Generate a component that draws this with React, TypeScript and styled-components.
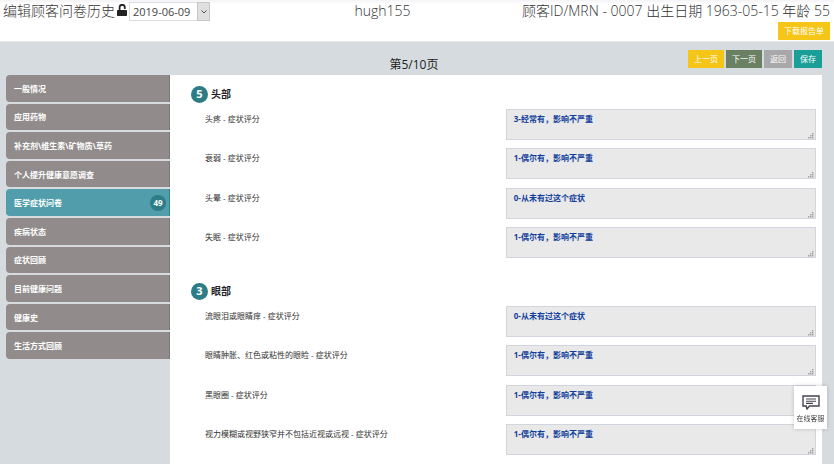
import React from "react";
import styled, { createGlobalStyle } from "styled-components";

const Global = createGlobalStyle`
  *, *::before, *::after { box-sizing: border-box; }
  body {
    margin: 0;
    background: #d6dbdf;
    color: #333;
    font-family: "Open Sans", "Noto Sans CJK SC", sans-serif;
    font-size: 8px;
    line-height: 12px;
    overflow: hidden;
  }
  button, select, textarea { font-family: inherit; }
`;

const Page = styled.div`
  display: flex;
  flex-direction: column;
  height: 100vh;
`;

const Header = styled.header`
  flex: none;
  background: linear-gradient(#f3f3f6, #fff 4px);
  border-bottom: 1px solid #e6eaec;
  padding: 0 4px 1px 3px;
`;

const TitleRow = styled.div`
  display: grid;
  grid-template-columns: 17fr 6fr 17fr;
  align-items: center;
  height: 20px;
  font-size: 14px;
  line-height: 20px;
  font-weight: 300;
  white-space: nowrap;
`;

const TitleGroup = styled.div`
  display: flex;
  align-items: center;
  gap: 2px;
`;

const Title = styled.h1`
  margin: 0;
  font-size: 14px;
  font-weight: 300;
`;

const Patient = styled.span`
  text-align: right;
`;

const DateField = styled.label`
  display: flex;
  position: relative;
  margin-top: 2px;
`;

const DateSelect = styled.select`
  appearance: none;
  width: 81px;
  height: 19px;
  border: 1px solid #dcdce2;
  border-radius: 0;
  padding: 0 14px 0 3px;
  background: #fff;
  color: #444;
  font-size: 11px;
`;

const Arrow = styled.span`
  position: absolute;
  right: 0;
  top: 0;
  bottom: 0;
  width: 13px;
  display: grid;
  place-items: center;
  background: #dfdfe0;
  border: 1px solid #c6c6c8;
  pointer-events: none;
`;

const DownloadRow = styled.div`
  display: flex;
  justify-content: flex-end;
  padding-top: 2px;
`;

const Button = styled.button<{ $bg: string }>`
  border: 0;
  height: 18px;
  padding: 0 6px;
  background: ${(p) => p.$bg};
  color: #fff;
  font-size: 8px;
  line-height: 18px;
`;

const Toolbar = styled.div`
  flex: none;
  display: grid;
  grid-template-columns: 1fr auto 1fr;
  height: 33px;
  padding: 8px 12px 0 6px;
`;

const PageCount = styled.div`
  grid-column: 2;
  padding-top: 5px;
  font-size: 12px;
  line-height: 20px;
  color: #222;
`;

const Actions = styled.div`
  display: flex;
  justify-content: flex-end;
  gap: 2px;
`;

const Body = styled.div`
  flex: 1;
  min-height: 0;
  display: flex;
  align-items: stretch;
  padding: 0 12px 0 6px;
`;

const Nav = styled.nav`
  flex: none;
  width: 164px;
  height: 284px;
  display: grid;
  grid-auto-rows: 1fr;
  gap: 2px;
`;

const NavItem = styled.a<{ $active?: boolean }>`
  display: flex;
  align-items: center;
  justify-content: space-between;
  padding: 1px 3px 0 8px;
  border-radius: 4px 0 0 4px;
  border-right: 1px solid ${(p) => (p.$active ? "#2f7f88" : "#7c7676")};
  background: ${(p) => (p.$active ? "#519dab" : "#918b8b")};
  color: #fff;
  font-weight: 700;
  text-decoration: none;
`;

const Badge = styled.span<{ $size: number }>`
  flex: none;
  display: grid;
  place-items: center;
  width: ${(p) => p.$size}px;
  height: ${(p) => p.$size}px;
  border-radius: 50%;
  background: #2d7d86;
  color: #fff;
  font-size: ${(p) => (p.$size > 16 ? 11 : 8)}px;
  font-weight: 700;
`;

const Panel = styled.main`
  flex: 1;
  min-width: 0;
  background: #fff;
  padding: 10px 6px 0 21px;
  overflow: hidden;
`;

const Section = styled.section`
  height: 197px;
`;

const SectionTitle = styled.h2`
  display: flex;
  align-items: center;
  gap: 3px;
  height: 18px;
  margin: 0 0 6px;
  color: #222;
  font-size: 10px;
  font-weight: 700;
`;

const Questions = styled.div`
  display: grid;
  grid-auto-rows: 1fr;
  height: 157px;
  padding-left: 14px;
`;

const Question = styled.div`
  display: grid;
  grid-template-columns: 32fr 33fr;
  align-items: start;
`;

const QuestionLabel = styled.label`
  padding-top: 4px;
`;

const AnswerBox = styled.div`
  display: flex;
  position: relative;
`;

const Answer = styled.textarea`
  width: 100%;
  height: 31px;
  resize: none;
  border: 1px solid #d3d5dd;
  border-radius: 0;
  padding: 3px 7px;
  background: #e9e9e9;
  color: #123f9c;
  font-size: 8px;
  line-height: 12px;
  font-weight: 700;
`;

const Grip = styled.svg`
  position: absolute;
  right: 2px;
  bottom: 1px;
  pointer-events: none;
`;

const Chat = styled.button`
  position: fixed;
  right: 7px;
  bottom: 35px;
  width: 33px;
  height: 43px;
  display: flex;
  flex-direction: column;
  align-items: center;
  gap: 4px;
  padding: 9px 0 0;
  border: 0;
  background: #fff;
  box-shadow: 0 0 4px rgba(0, 0, 0, 0.2);
  color: #444;
  font-size: 7px;
  line-height: 10px;
`;

const navItems: { label: string; count?: number }[] = [
  { label: "一般情况" },
  { label: "应用药物" },
  { label: "补充剂\\维生素\\矿物质\\草药" },
  { label: "个人提升健康意愿调查" },
  { label: "医学症状问卷", count: 49 },
  { label: "疾病状态" },
  { label: "症状回顾" },
  { label: "目前健康问题" },
  { label: "健康史" },
  { label: "生活方式回顾" },
];

const sections = [
  {
    title: "头部",
    score: 5,
    rows: [
      ["头疼", "3-经常有，影响不严重"],
      ["衰弱", "1-偶尔有，影响不严重"],
      ["头晕", "0-从未有过这个症状"],
      ["失眠", "1-偶尔有，影响不严重"],
    ],
  },
  {
    title: "眼部",
    score: 3,
    rows: [
      ["流眼泪或眼睛痒", "0-从未有过这个症状"],
      ["眼睛肿胀、红色或粘性的眼睑", "1-偶尔有，影响不严重"],
      ["黑眼圈", "1-偶尔有，影响不严重"],
      ["视力模糊或视野狭窄并不包括近视或远视", "1-偶尔有，影响不严重"],
    ],
  },
];

const UnlockIcon = () => (
  <svg width="10" height="14" viewBox="0 0 10 14" aria-hidden="true">
    <path d="M2.6 7V3.4a2.6 2.6 0 0 1 5.2 0V5" fill="none" stroke="#222" strokeWidth="1.7" />
    <rect x="0" y="6" width="10" height="6" rx="0.8" fill="#222" />
  </svg>
);

const ChatIcon = () => (
  <svg width="18" height="15" viewBox="0 0 18 15" fill="none" stroke="#444450" aria-hidden="true">
    <path d="M1 1h16v10H7.5L5 14l-.8-3H1z" strokeWidth="1.4" />
    <path d="M4 4h10M4 6.2h10M4 8.4h7" strokeWidth="1.1" />
  </svg>
);

const GripIcon = () => (
  <Grip width="6" height="6" viewBox="0 0 6 6" fill="#a0a0a0" aria-hidden="true">
    <path d="M4 0h1.4v1.4H4zM4 2h1.4v1.4H4zM2 2h1.4v1.4H2zM4 4h1.4v1.4H4zM2 4h1.4v1.4H2zM0 4h1.4v1.4H0z" />
  </Grip>
);

export default function App() {
  return (
    <Page>
      <Global />
      <Header>
        <TitleRow>
          <TitleGroup>
            <Title>编辑顾客问卷历史</Title>
            <UnlockIcon />
            <DateField>
              <DateSelect aria-label="日期" defaultValue="2019-06-09">
                <option>2019-06-09</option>
              </DateSelect>
              <Arrow>
                <svg width="6" height="4" viewBox="0 0 6 4" fill="none" stroke="#555" aria-hidden="true">
                  <path d="M0.5 0.5L3 3l2.5-2.5" />
                </svg>
              </Arrow>
            </DateField>
          </TitleGroup>
          <span>hugh155</span>
          <Patient>顾客ID/MRN - 0007 出生日期 1963-05-15 年龄 55</Patient>
        </TitleRow>
        <DownloadRow>
          <Button $bg="#f5c518">下载报告单</Button>
        </DownloadRow>
      </Header>
      <Toolbar>
        <PageCount>第5/10页</PageCount>
        <Actions>
          <Button $bg="#f5c518">上一页</Button>
          <Button $bg="#6a8063">下一页</Button>
          <Button $bg="#a8a8aa">返回</Button>
          <Button $bg="#1a9f98">保存</Button>
        </Actions>
      </Toolbar>
      <Body>
        <Nav>
          {navItems.map((item) => (
            <NavItem key={item.label} href="#" $active={item.count !== undefined}>
              {item.label}
              {item.count !== undefined && <Badge $size={16}>{item.count}</Badge>}
            </NavItem>
          ))}
        </Nav>
        <Panel>
          {sections.map((section, s) => (
            <Section key={section.title}>
              <SectionTitle>
                <Badge $size={17}>{section.score}</Badge>
                {section.title}
              </SectionTitle>
              <Questions>
                {section.rows.map(([label, answer], i) => (
                  <Question key={label}>
                    <QuestionLabel htmlFor={`q${s}-${i}`}>{label} - 症状评分</QuestionLabel>
                    <AnswerBox>
                      <Answer id={`q${s}-${i}`} readOnly defaultValue={answer} />
                      <GripIcon />
                    </AnswerBox>
                  </Question>
                ))}
              </Questions>
            </Section>
          ))}
        </Panel>
      </Body>
      <Chat>
        <ChatIcon />
        在线客服
      </Chat>
    </Page>
  );
}
